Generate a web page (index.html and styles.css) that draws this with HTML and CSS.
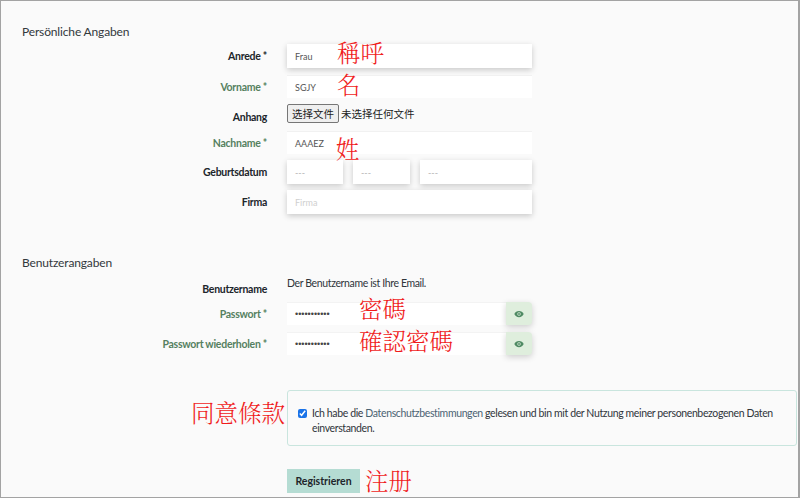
FILE: index.html
```html
<!DOCTYPE html>
<html lang="de">
<head>
<meta charset="utf-8">
<title>Registrierung</title>
<link rel="stylesheet" href="styles.css">
</head>
<body>
<main class="page">
  <form class="form">
    <h2 class="section-title first">Persönliche Angaben</h2>
    <div class="row h24 anrede">
      <label class="label">Anrede *</label>
      <div class="field shadowed"><span class="value">Frau</span></div>
    </div>
    <div class="row h23 gap7">
      <label class="label ok">Vorname *</label>
      <div class="field plain"><span class="value">SGJY</span></div>
    </div>
    <div class="row h19 gap6">
      <label class="label low">Anhang</label>
      <div class="file-wrap"><span class="file-btn">选择文件</span><span class="file-text">未选择任何文件</span></div>
    </div>
    <div class="row h23 gap8">
      <label class="label ok">Nachname *</label>
      <div class="field plain"><span class="value">AAAEZ</span></div>
    </div>
    <div class="row h24 gap6">
      <label class="label">Geburtsdatum</label>
      <div class="date-group">
        <div class="field shadowed d1"><span class="placeholder">---</span></div>
        <div class="field shadowed d2"><span class="placeholder">---</span></div>
        <div class="field shadowed d3"><span class="placeholder">---</span></div>
      </div>
    </div>
    <div class="row h24 gap6">
      <label class="label">Firma</label>
      <div class="field shadowed"><span class="placeholder firma">Firma</span></div>
    </div>

    <h2 class="section-title second">Benutzerangaben</h2>
    <div class="row user-row">
      <label class="label low-user">Benutzername</label>
      <div class="hint">Der Benutzername ist Ihre Email.</div>
    </div>
    <div class="row h23 pw-first">
      <label class="label ok">Passwort *</label>
      <div class="pw-group">
        <div class="pw-input"><span class="dots">•••••••••••</span></div>
        <span class="eye"><svg viewBox="0 0 16 12" width="10" height="8"><path d="M8 1C4.6 1 1.8 3 .5 6c1.3 3 4.1 5 7.5 5s6.2-2 7.5-5C14.2 3 11.4 1 8 1z" fill="#4f8a63"/><circle cx="8" cy="6" r="2.7" fill="#dfeedd"/><circle cx="8" cy="6" r="1.5" fill="#4f8a63"/></svg></span>
      </div>
    </div>
    <div class="row h23 gap7">
      <label class="label ok">Passwort wiederholen *</label>
      <div class="pw-group">
        <div class="pw-input"><span class="dots">•••••••••••</span></div>
        <span class="eye"><svg viewBox="0 0 16 12" width="10" height="8"><path d="M8 1C4.6 1 1.8 3 .5 6c1.3 3 4.1 5 7.5 5s6.2-2 7.5-5C14.2 3 11.4 1 8 1z" fill="#4f8a63"/><circle cx="8" cy="6" r="2.7" fill="#dfeedd"/><circle cx="8" cy="6" r="1.5" fill="#4f8a63"/></svg></span>
      </div>
    </div>

    <div class="consent">
      <input class="check" type="checkbox" checked>
      <p class="consent-text">Ich habe die <a class="link">Datenschutzbestimmungen</a> gelesen und bin mit der Nutzung meiner personenbezogenen Daten einverstanden.</p>
    </div>
    <button class="submit" type="button">Registrieren</button>
  </form>
  <span class="note n-anrede">稱呼</span>
  <span class="note n-vorname">名</span>
  <span class="note n-nachname">姓</span>
  <span class="note n-pw">密碼</span>
  <span class="note n-pw2">確認密碼</span>
  <span class="note n-agree">同意條款</span>
  <span class="note n-reg">注册</span>
</main>
</body>
</html>
```

FILE: styles.css
```css
* { box-sizing: border-box; }
html, body { margin: 0; padding: 0; }
body {
  width: 800px;
  height: 498px;
  overflow: hidden;
  background: #fafafa;
  font-family: Lato, "Open Sans", "Noto Sans CJK SC", sans-serif;
  color: #2b2f33;
}
.page {
  position: relative;
  width: 800px;
  height: 498px;
  border-style: solid;
  border-color: #a3a3a3;
  border-width: 1px 2px 1px 1px;
}
.form { padding: 0 0 0 21px; }
.section-title {
  margin: 0;
  font-size: 12px;
  line-height: 16px;
  font-weight: 400;
  letter-spacing: -.15px;
  color: #33383c;
}
.section-title.first { padding-top: 23px; }
.section-title.second { margin-top: 41px; }
.row { display: flex; align-items: center; }
.h24 { height: 24px; }
.h23 { height: 23px; }
.h19 { height: 19px; }
.anrede { margin-top: 4px; }
.gap6 { margin-top: 6px; }
.gap7 { margin-top: 7px; }
.gap8 { margin-top: 8px; }
.label {
  width: 245px;
  margin-right: 20px;
  flex: none;
  text-align: right;
  font-size: 10.5px;
  font-weight: 700;
  letter-spacing: -.28px;
  color: #20252a;
  white-space: nowrap;
}
.label.ok { color: #55805f; }
.label.low { position: relative; top: 3px; }
.label.low-user { position: relative; top: 5px; }
.field {
  width: 245px;
  height: 100%;
  background: #fff;
  padding-left: 8px;
  display: flex;
  align-items: center;
  font-family: Lato, sans-serif;
  font-size: 9px;
}
.shadowed { box-shadow: 0 2px 6px rgba(0, 0, 0, .2); }
.plain { border-top: 1px solid #f1f1f1; }
.value { color: #555; }
.placeholder { color: #b4b4b4; }
.firma { color: #cfcfcf; }
.file-wrap { display: flex; align-items: center; }
.file-btn {
  width: 52px;
  height: 19px;
  background: #efefef;
  border: 1px solid #767676;
  border-radius: 2px;
  font-size: 10.5px;
  line-height: 17px;
  text-align: center;
  color: #222;
  font-family: "Noto Sans CJK SC", sans-serif;
}
.file-text {
  margin-left: 2px;
  font-size: 10.5px;
  color: #222;
  font-family: "Noto Sans CJK SC", sans-serif;
}
.date-group { display: flex; height: 100%; width: 245px; }
.d1 { width: 56px; }
.d2 { width: 57px; margin-left: 10px; }
.d3 { width: 112px; margin-left: 10px; }
.user-row { margin-top: 3px; height: 20px; }
.hint { font-size: 10.5px; letter-spacing: -.37px; color: #30353a; position: relative; top: -1px; }
.pw-first { margin-top: 8px; }
.pw-group { display: flex; width: 245px; height: 100%; }
.pw-input {
  flex: 1;
  background: #fff;
  padding-left: 8px;
  display: flex;
  align-items: center;
  border-top: 1px solid #f3f3f3;
}
.dots { font-size: 9px; color: #444; font-family: "Liberation Sans", sans-serif; }
.eye {
  width: 26px;
  background: #dfeedd;
  border-radius: 0 4px 4px 0;
  box-shadow: 0 2px 6px rgba(0, 0, 0, .18);
  display: flex;
  align-items: center;
  justify-content: center;
}
.consent {
  margin: 35px 0 0 265px;
  width: 510px;
  height: 56px;
  padding: 0 10px;
  display: flex;
  align-items: flex-start;
  border: 1px solid #c9e5de;
  border-radius: 3px;
}
.check {
  margin: 18px 5px 0 0;
  width: 9px;
  height: 9px;
  flex: none;
  accent-color: #1a73e8;
}
.consent-text {
  margin: 15px 0 0;
  font-size: 10.5px;
  letter-spacing: -.37px;
  line-height: 15px;
  color: #30353a;
}
.link { color: #4a6272; }
.submit {
  display: block;
  margin: 23px 0 0 265px;
  width: 73px;
  height: 24px;
  padding: 0;
  border: 0;
  background: #b5dcd3;
  font-family: inherit;
  font-size: 10.5px;
  font-weight: 700;
  color: #20252a;
}
.note {
  position: absolute;
  font-family: "Noto Serif CJK TC", "Noto Sans CJK TC", serif;
  font-weight: 300;
  font-size: 23.5px;
  line-height: 24px;
  color: #f01c1c;
  white-space: nowrap;
}
.n-anrede { left: 336px; top: 39px; }
.n-vorname { left: 336px; top: 71px; }
.n-nachname { left: 335px; top: 135px; }
.n-pw { left: 358px; top: 295px; }
.n-pw2 { left: 358px; top: 327px; }
.n-agree { left: 190px; top: 399px; }
.n-reg { left: 364px; top: 467px; }
```
